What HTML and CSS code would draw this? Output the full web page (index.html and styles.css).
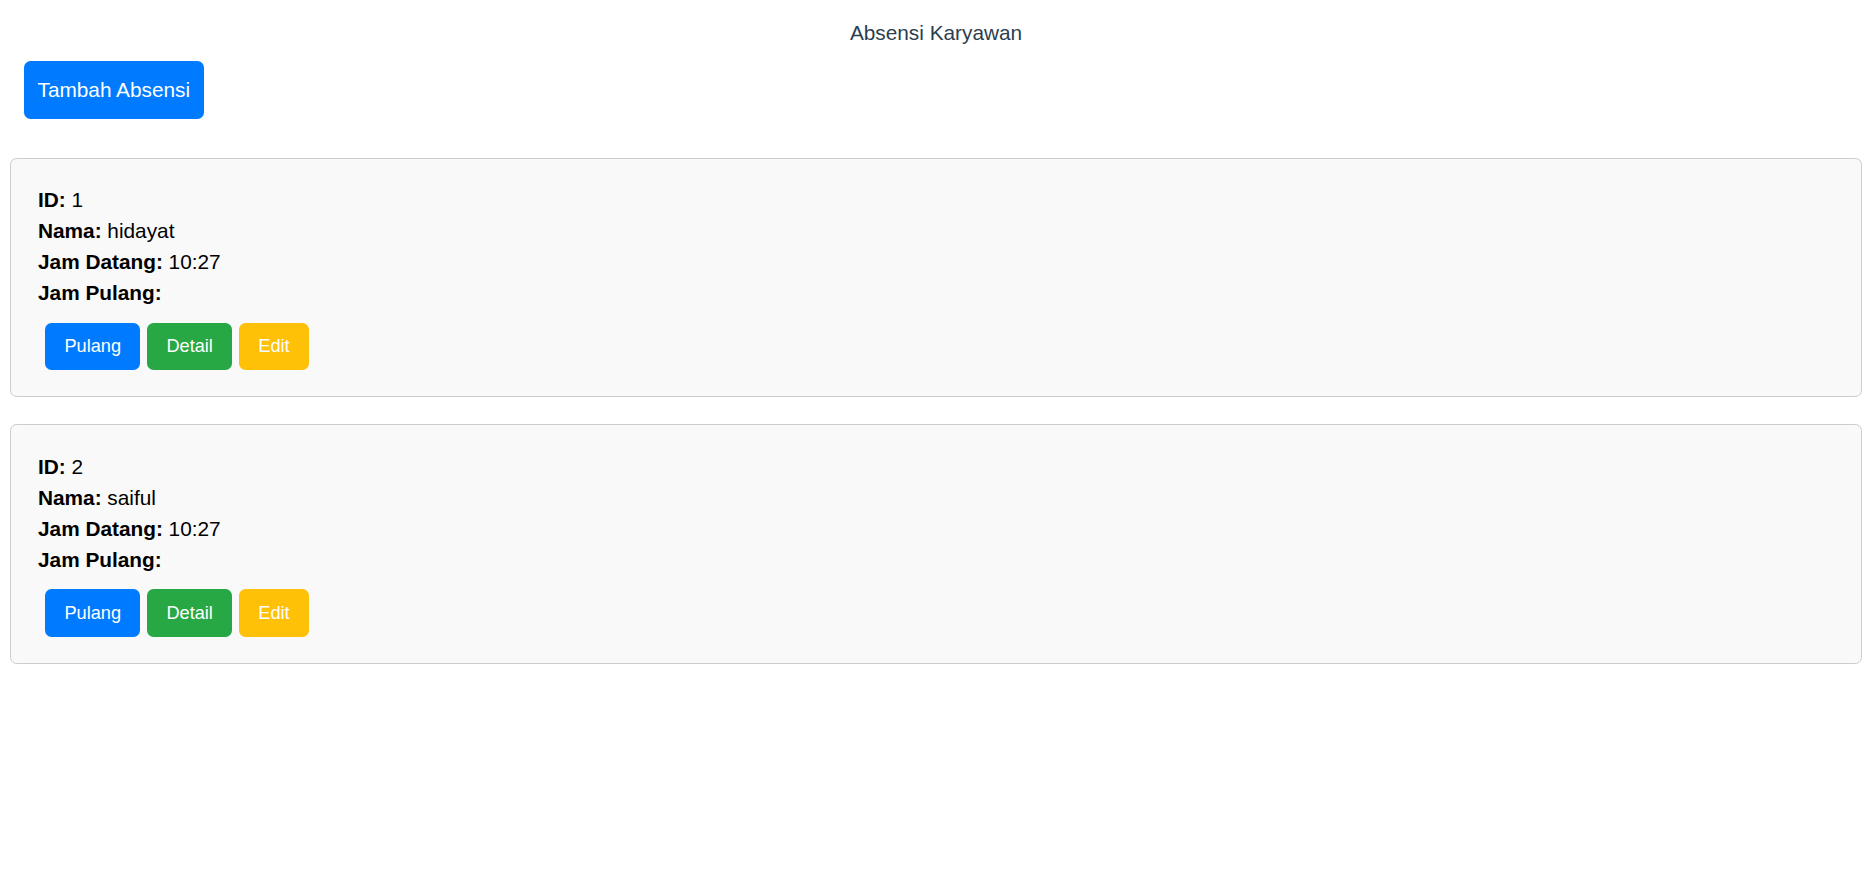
FILE: index.html
```html
<!DOCTYPE html>
<html lang="id">
<head>
<meta charset="utf-8">
<title>Absensi Karyawan</title>
<link rel="stylesheet" href="styles.css">
</head>
<body>
<div class="app">
  <h1 class="title">Absensi Karyawan</h1>
  <div class="toolbar">
    <button class="btn btn-add">Tambah Absensi</button>
  </div>
  <div class="list">
    <div class="card">
      <p class="field"><strong>ID:</strong> 1</p>
      <p class="field"><strong>Nama:</strong> hidayat</p>
      <p class="field"><strong>Jam Datang:</strong> 10:27</p>
      <p class="field"><strong>Jam Pulang:</strong> </p>
      <div class="actions">
        <button class="btn btn-sm btn-blue">Pulang</button>
        <button class="btn btn-sm btn-green">Detail</button>
        <button class="btn btn-sm btn-yellow">Edit</button>
      </div>
    </div>
    <div class="card">
      <p class="field"><strong>ID:</strong> 2</p>
      <p class="field"><strong>Nama:</strong> saiful</p>
      <p class="field"><strong>Jam Datang:</strong> 10:27</p>
      <p class="field"><strong>Jam Pulang:</strong> </p>
      <div class="actions">
        <button class="btn btn-sm btn-blue">Pulang</button>
        <button class="btn btn-sm btn-green">Detail</button>
        <button class="btn btn-sm btn-yellow">Edit</button>
      </div>
    </div>
  </div>
</div>
</body>
</html>
```

FILE: styles.css
```css
* { box-sizing: border-box; }

html, body {
  margin: 0;
  padding: 0;
  background: #ffffff;
}

body {
  font-family: "Liberation Sans", Arial, sans-serif;
  color: #000;
}

.app {
  padding: 0 10px;
}

.title {
  margin: 0;
  padding-top: 21px;
  font-size: 20.8px;
  line-height: 24px;
  font-weight: normal;
  text-align: center;
  color: #2c3e50;
}

.toolbar {
  display: flex;
  padding: 16px 0 0 14px;
}

.btn {
  border: none;
  color: #fff;
  font-family: "Liberation Sans", Arial, sans-serif;
  cursor: pointer;
}

.btn-add {
  background: #007bff;
  font-size: 20.8px;
  line-height: 24px;
  padding: 17px 13.5px 16.5px;
  border-radius: 6.5px;
}

.list {
  display: flex;
  flex-direction: column;
  gap: 27px;
  padding-top: 39.5px;
}

.card {
  background: #f9f9f9;
  border: 1px solid #cccccc;
  border-radius: 6.5px;
  padding: 25.3px 27px 26px;
}

.field {
  margin: 0;
  font-size: 20.8px;
  line-height: 31px;
}

.actions {
  display: flex;
  gap: 6.6px;
  padding: 14.7px 0 0 7px;
}

.btn-sm {
  font-size: 18.2px;
  line-height: 21px;
  padding: 13.2px 19.4px;
  border-radius: 6.5px;
}

.btn-blue { background: #007bff; }
.btn-green { background: #28a745; }
.btn-yellow { background: #ffc107; }
```
